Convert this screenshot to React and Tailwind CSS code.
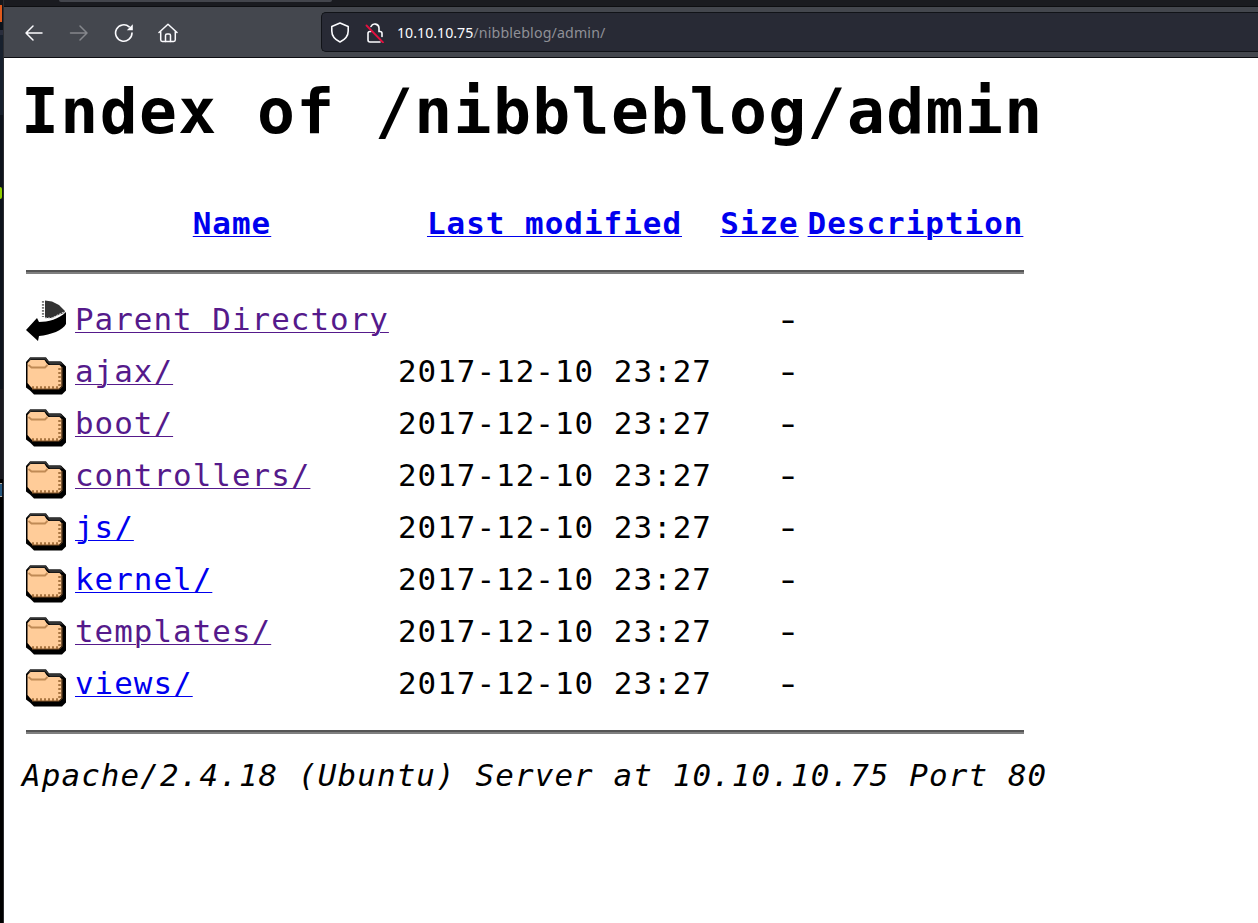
import React from "react";

const rows = [
  ["ajax/", true],
  ["boot/", true],
  ["controllers/", true],
  ["js/", false],
  ["kernel/", false],
  ["templates/", true],
  ["views/", false],
];

const linkBase = "underline decoration-1 underline-offset-[2px]";
const grid = "grid grid-cols-[49px_323px_322px_79px_8px_217px] h-[52px]";

function Folder() {
  return (
    <svg className="mt-[11px] block" width="41" height="38" viewBox="0 0 41 38">
      <path d="M4 .5h16l3 4h12l5 5v24l-4 4H8l-4-4-4-3V5z" fill="#000" />
      <path d="M4 .5h16l3 4h11l3 3H24l-3-3-2-2H5L2 5z" fill="#333" />
      <path d="M1.500 6l3-3h14l2 3 2 2h11l2 2v19l-3 3H7l-3-3-2.500-3z" fill="#ffcc99" />
      <path d="M2.500 8l3 2.500h13.500l2.500-2.500" fill="none" stroke="#c08a55" strokeWidth="1.800" />
      <path d="M33.500 11v18" stroke="#a87440" strokeWidth="2.500" strokeDasharray="2 2" />
      <path d="M6 30.500h27" stroke="#a87440" strokeWidth="2.500" strokeDasharray="2 2" />
      <path d="M6 32h27.500l2.500-2.500V10" fill="none" stroke="#805226" strokeWidth="1" />
    </svg>
  );
}

function Back() {
  return (
    <svg className="mt-[5px] block" width="41" height="44" viewBox="0 0 41 44">
      <path d="M19 1.500l7 1 7 3.500 6 6-1 2-6 2-6 3h-7z" fill="#333" />
      <path d="M17 2v16" stroke="#777" strokeWidth="2.200" strokeDasharray="1.700 1.300" />
      <path d="M0 31l11-12 2 4c9 0 20-3 27-10v12c-3 6-15 11-27 12l-1 5z" fill="#000" />
      <path d="M19 19h7l12-6" fill="none" stroke="#ccc" strokeWidth="1.200" strokeDasharray="2 1" />
    </svg>
  );
}

function Toolbar() {
  return (
    <div className="flex h-[50px] items-center bg-[#44474e] text-[#fbfbfe]">
      <svg className="ml-[20px] mt-px" width="20" height="20" viewBox="0 0 20 20" fill="none" stroke="currentColor" strokeWidth="1.5" strokeLinecap="round" strokeLinejoin="round">
        <path d="M18 10H2M9 3l-7 7 7 7" />
      </svg>
      <svg className="ml-[25px] mt-px text-[#85878c]" width="20" height="20" viewBox="0 0 20 20" fill="none" stroke="currentColor" strokeWidth="1.5" strokeLinecap="round" strokeLinejoin="round">
        <path d="M1.500 10H18M11 3l7 7-7 7" />
      </svg>
      <svg className="ml-[25px] mt-px" width="20" height="20" viewBox="0 0 20 20" fill="none" stroke="currentColor" strokeWidth="1.600" strokeLinecap="round">
        <path d="M18 10a8.200 8.200 0 1 1-2.800-6.200" />
        <path d="M18.800 1.200v6h-6z" fill="currentColor" stroke="none" />
      </svg>
      <svg className="ml-[24px] mt-px" width="20" height="20" viewBox="0 0 20 20" fill="none" stroke="currentColor" strokeWidth="1.500" strokeLinecap="round" strokeLinejoin="round">
        <path d="M1 9.500L10 1.200l9 8.300M2.700 8.500v8.300q0 1.700 1.700 1.700h11.200q1.700 0 1.700-1.700V8.500" />
        <path d="M7.500 18.500v-6q0-1.500 1.500-1.500h2q1.500 0 1.500 1.500v6" />
      </svg>
      <div className="ml-[143px] flex h-[40px] flex-1 items-center rounded-l-[5px] border border-r-0 border-[#111318] bg-[#282a35]">
        <svg className="ml-[8px]" width="20" height="21" viewBox="0 0 20 21" fill="none" stroke="currentColor" strokeWidth="1.600" strokeLinejoin="round">
          <path d="M10 1l8.200 3.400V9c0 5-3 8.500-8.200 11C4.800 17.500 1.800 14 1.800 9V4.400z" />
        </svg>
        <svg className="ml-[15px]" width="20" height="21" viewBox="0 0 20 21" fill="none" stroke="currentColor" strokeWidth="1.600" strokeLinecap="round">
          <path d="M6 4.500a4.200 4.200 0 0 1 8 1.500v3.500h1c1.200 0 2 .8 2 2v3M6 9.500H5c-1.200 0-2 .8-2 2V18c0 1.200.8 2 2 2h10" />
          <path d="M1.500 3.500l16.500 17" stroke="#e2103f" strokeWidth="1.800" />
        </svg>
        <span className="ml-[12px] mt-px whitespace-pre font-['Noto_Sans',sans-serif] text-[14.2px] leading-[20px]">
          10.10.10.75<span className="tracking-[0.15px] text-[#8f9097]">/nibbleblog/admin/</span>
        </span>
      </div>
    </div>
  );
}

export default function App() {
  return (
    <div className="flex h-[923px] w-[1258px] overflow-hidden bg-white">
      <div className="flex w-[4px] shrink-0 border-r border-[#2b2c30] bg-[#0d131c]">
        <div className="flex w-[3px] flex-col">
          <div className="h-[5px] bg-[#15171b]" />
          <div className="h-[17px] w-[2px] bg-[#e05a1c]" />
          <div className="h-[8px]" />
          <div className="h-[5px] bg-[#292d3c]" />
          <div className="h-[80px] bg-[#17202d]" />
          <div className="h-[72px]" />
          <div className="h-[12px] w-[2px] rounded-r-[2px] bg-[#8fce00]" />
          <div className="h-[190px]" />
          <div className="h-[90px] bg-[#19191f]" />
          <div className="h-[4px] bg-black" />
          <div className="h-[14px] w-[2px] border-y border-[#b5aca0] bg-[#25557c]" />
          <div className="flex-1 bg-black" />
        </div>
      </div>
      <div className="flex min-w-0 flex-1 flex-col">
        <div className="flex h-[7px] flex-col border-b border-[#0d0e11] bg-[#1a1b20]">
          <div className="ml-[55px] h-[2px] w-[273px] rounded-b-[3px] bg-[#43454c]" />
        </div>
        <Toolbar />
        <div className="h-px shrink-0 bg-[#0d0e12]" />
        <main className="pl-[22px] font-['DejaVu_Sans_Mono',monospace] text-[30.9px] tracking-[1.020px] text-black">
          <h1 className="-ml-[5px] mt-[13px] h-[80px] whitespace-pre text-[63px] font-bold leading-[82px] tracking-[1.400px]">
            Index of /nibbleblog/admin
          </h1>
          <div className="w-[998px]">
            <div className={grid + " mt-[46px] text-center font-bold leading-[52px] text-[#0000ee]"}>
              <span />
              <span className="pr-[9px]"><a className={linkBase}>Name</a></span>
              <span className="pr-[9px]"><a className={linkBase}>Last modified</a></span>
              <a className={linkBase}>Size</a>
              <span />
              <a className={linkBase}>Description</a>
            </div>
            <div className="mt-[21px] h-[4px] border-b-2 border-t-2 border-b-[#808080] border-t-[#555555]" />
            <div className={grid + " mt-[20px] leading-[50px]"}>
              <Back />
              <a className={linkBase + " whitespace-pre text-[#551a8b]"}>Parent Directory</a>
              <span />
              <span className="w-[20px] scale-x-[1.4] justify-self-end">-</span>
            </div>
            {rows.map(([name, visited]) => (
              <div key={name} className={grid + " leading-[50px]"}>
                <Folder />
                <a className={linkBase + " " + (visited ? "text-[#551a8b]" : "text-[#0000ee]")}>{name}</a>
                <span className="whitespace-pre">2017-12-10 23:27</span>
                <span className="w-[20px] scale-x-[1.4] justify-self-end">-</span>
              </div>
            ))}
            <div className="mt-[20px] h-[4px] border-b-2 border-t-2 border-b-[#808080] border-t-[#555555]" />
          </div>
          <address className="-ml-[4px] mt-[15px] whitespace-pre italic leading-[52px] tracking-[1.120px]">
            Apache/2.4.18 (Ubuntu) Server at 10.10.10.75 Port 80
          </address>
        </main>
      </div>
    </div>
  );
}
